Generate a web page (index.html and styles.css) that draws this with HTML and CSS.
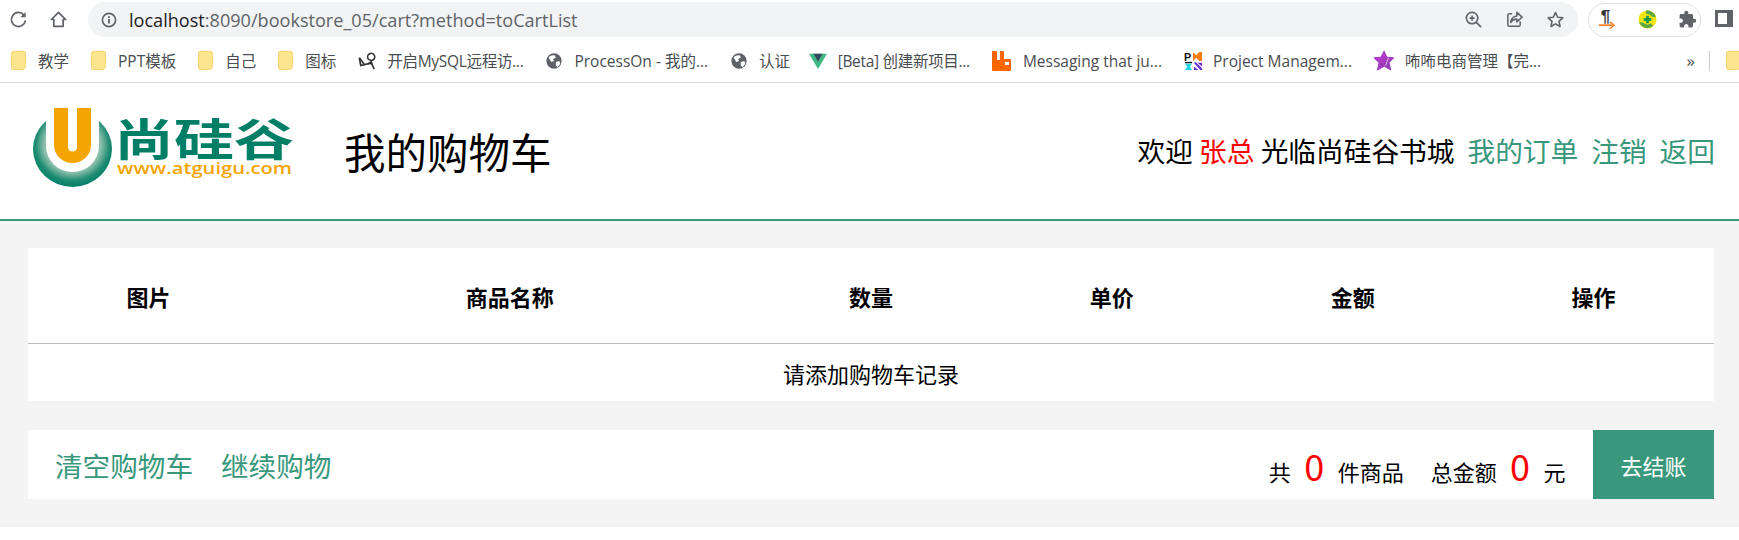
FILE: index.html
```html
<!DOCTYPE html>
<html lang="zh-CN">
<head>
  <meta charset="UTF-8" />
  <title>我的购物车</title>
  <link rel="stylesheet" href="styles.css">
</head>
<body>
  <div class="toolbar">
    <svg class="tool-icon reload" viewBox="0 0 20 20"><path d="M15.6 5.2A7.4 7.4 0 1 0 17.3 11" fill="none" stroke="#5f6368" stroke-width="1.8"/><path d="M17.5 2v5.6h-5.6z" fill="#5f6368"/></svg>
    <svg class="tool-icon home" viewBox="0 0 20 20"><path d="M10 2.5 2.5 10h2.600v7.200h9.800V10h2.600z" fill="none" stroke="#5f6368" stroke-width="1.8" stroke-linejoin="round"/></svg>
    <div class="omnibox">
      <svg class="info" viewBox="0 0 16 16"><circle cx="8" cy="8" r="6.6" fill="none" stroke="#5f6368" stroke-width="1.6"/><rect x="7.1" y="7" width="1.8" height="4.6" fill="#5f6368"/><rect x="7.1" y="4.2" width="1.8" height="1.8" fill="#5f6368"/></svg>
      <span class="url"><b>localhost</b>:8090/bookstore_05/cart?method=toCartList</span>
      <div class="omni-actions">
        <svg viewBox="0 0 20 20"><circle cx="8.5" cy="8.5" r="6" fill="none" stroke="#5f6368" stroke-width="1.7"/><path d="m13 13 5 5M5.800 8.500h5.400M8.500 5.800v5.400" stroke="#5f6368" stroke-width="1.7" fill="none"/></svg>
        <svg viewBox="0 0 20 20"><path d="M7.500 4H4.500a1.500 1.500 0 0 0-1.500 1.500v10A1.500 1.500 0 0 0 4.500 17h10a1.500 1.500 0 0 0 1.500-1.500V12" fill="none" stroke="#5f6368" stroke-width="1.6"/><path d="M12.500 2.500 18 7.500l-5.500 5V9.600c-3 0-5 1-6.500 3.600.4-4 2.700-6.600 6.500-7z" fill="none" stroke="#5f6368" stroke-width="1.6" stroke-linejoin="round"/></svg>
        <svg viewBox="0 0 20 20"><path d="m10 2.600 2.300 5 5.400.6-4 3.700 1.100 5.400L10 14.600l-4.800 2.700 1.100-5.400-4-3.700 5.400-.6z" fill="none" stroke="#5f6368" stroke-width="1.7" stroke-linejoin="round"/></svg>
      </div>
    </div>
    <div class="ext-pill">
      <svg viewBox="0 0 20 20"><text x="8" y="12.500" class="pilcrow">¶</text><path d="M1 16h14" stroke="#f47b20" stroke-width="1.800"/><path d="m12.500 12.500 4.500 3.500-4.500 3.500" fill="none" stroke="#f47b20" stroke-width="1.500"/></svg>
      <svg viewBox="0 0 20 20"><circle cx="10" cy="10" r="9.500" fill="#f5e50c"/><path d="M1 13a9.500 9.500 0 0 0 15 3.500l-2.500-2.500a5.500 5.500 0 0 1-8-.8zM19 7.500A9.500 9.500 0 0 0 8 .8l.8 3.400a6 6 0 0 1 6 3z" fill="#5aa845"/><path d="M10 6v8M6 10h8" stroke="#1f9a46" stroke-width="3"/></svg>
      <svg viewBox="0 0 24 24"><path d="M20.500 11H19V7c0-1.100-.9-2-2-2h-4V3.500C13 2.120 11.880 1 10.500 1S8 2.120 8 3.500V5H4c-1.100 0-1.990.9-1.990 2v3.800H3.500c1.490 0 2.700 1.210 2.700 2.700s-1.210 2.700-2.700 2.700H2V20c0 1.100.9 2 2 2h3.800v-1.500c0-1.490 1.210-2.700 2.700-2.700s2.700 1.210 2.700 2.700V22H17c1.100 0 2-.9 2-2v-4h1.500c1.380 0 2.500-1.120 2.500-2.500S21.880 11 20.500 11z" fill="#5f6368"/></svg>
    </div>
    <div class="side-panel"></div>
  </div>

  <div class="bookmarks">
    <span class="bm in-folder"><i class="folder"></i>教学</span>
    <span class="bm in-folder"><i class="folder"></i>PPT模板</span>
    <span class="bm in-folder"><i class="folder"></i>自己</span>
    <span class="bm in-folder"><i class="folder"></i>图标</span>
    <span class="bm tight"><svg viewBox="0 0 20 20"><path d="M1.500 6.500 7 14l8-1.500L18 19" fill="none" stroke="#333" stroke-width="1.800"/><path d="M1.500 6.500 3 15l4-1M15 11l-4 2" fill="none" stroke="#333" stroke-width="1.800"/><path d="M15 9.500a4 4 0 1 0-3.500-1.500l3 1.500 1 5" fill="none" stroke="#333" stroke-width="1.700"/></svg>开启MySQL远程访...</span>
    <span class="bm"><svg viewBox="0 0 20 20"><circle cx="10" cy="10" r="8.500" fill="#5f6368"/><path d="M4 6c2-2 5-3 7-2l1 2-3 2 1 2-3 1zM12 11l4-1 1 3-3 4-2-2z" fill="#fff"/></svg>ProcessOn - 我的...</span>
    <span class="bm"><svg viewBox="0 0 20 20"><circle cx="10" cy="10" r="8.500" fill="#5f6368"/><path d="M4 6c2-2 5-3 7-2l1 2-3 2 1 2-3 1zM12 11l4-1 1 3-3 4-2-2z" fill="#fff"/></svg>认证</span>
    <span class="bm tight vue"><svg viewBox="0 0 20 20"><path d="M0 2h20L10 19z" fill="#41b883"/><path d="M5 2h10l-5 8.500z" fill="#35495e"/></svg>[Beta] 创建新项目...</span>
    <span class="bm big-icon"><svg viewBox="0 0 20 20"><path d="M0 1a1 1 0 0 1 1-1h3a1 1 0 0 1 1 1v8h3V1a1 1 0 0 1 1-1h2a1 1 0 0 1 1 1v7h6a1 1 0 0 1 1 1v10a1 1 0 0 1-1 1H1a1 1 0 0 1-1-1z" fill="#ff6600"/><rect x="13" y="11" width="4" height="3" fill="#fff"/></svg>Messaging that ju...</span>
    <span class="bm"><svg viewBox="0 0 20 20"><text x="0" y="9.500" class="pm-p">P</text><path d="M1 11h8v1.500H1z" fill="#111"/><path d="M10 0l3.500 3.500L17 0h3v10h-3l-3.500-3.500L10 10z" fill="#f97a12"/><path d="M1 13h8l-2.500 3 2.500 4H1l2.500-4z" fill="#21d4ea"/><path d="M11 12l2-1 7 7v2h-2zM11 16l5 4h-5zM15 12h5v4z" fill="#6b2fd6"/></svg>Project Managem...</span>
    <span class="bm big-icon"><svg viewBox="0 0 20 20"><defs><linearGradient id="star" x1="0" y1="0" x2="1" y2="1"><stop offset="0" stop-color="#d433e0"/><stop offset="1" stop-color="#7a3fa0"/></linearGradient></defs><path d="m10 0 2.800 6.200 7 .5-4.800 5 1.800 7.300-6.500-3.700L3.500 19l1.500-7.300L0 6.700l7-.5z" fill="url(#star)" stroke="#a23ec9" stroke-linejoin="round"/><path d="m14.500 7-3 7.500" stroke="#fff" stroke-width="1" opacity=".7"/></svg>咘咘电商管理【完...</span>
    <span class="more">»</span>
    <i class="sep"></i>
    <i class="folder last"></i>
  </div>

  <div class="header">
    <svg class="logo" viewBox="0 0 262 80">
      <defs>
        <radialGradient id="ring" cx="0.5" cy="0.45" r="0.55">
          <stop offset="0.65" stop-color="#8cbfac"/>
          <stop offset="0.85" stop-color="#1f8c72"/>
          <stop offset="1" stop-color="#007f66"/>
        </radialGradient>
      </defs>
      <ellipse cx="40.500" cy="41" rx="39.500" ry="38" fill="url(#ring)"/>
      <path d="M14 0h53v38a26.500 26 0 0 1-53 0z" fill="#fff"/>
      <path d="M22 0h37v37a18.500 18 0 0 1-37 0z" fill="#f5a503"/>
      <path d="M36 0h9v39a4.500 4.500 0 0 1-9 0z" fill="#fff"/>
      <text x="82" y="48" class="logo-cn" textLength="180" lengthAdjust="spacingAndGlyphs">尚硅谷</text>
      <text x="85" y="65.500" class="logo-en" textLength="175" lengthAdjust="spacingAndGlyphs">www.atguigu.com</text>
    </svg>
    <h1 class="page-title">我的购物车</h1>
    <div class="user-nav">
      <span>欢迎 <em>张总</em> 光临尚硅谷书城</span>
      <a href="#">我的订单</a>
      <a href="#">注销</a>
      <a href="#">返回</a>
    </div>
  </div>

  <div class="content">
    <table class="cart-table">
      <thead>
        <tr><th>图片</th><th class="wide">商品名称</th><th>数量</th><th>单价</th><th>金额</th><th>操作</th></tr>
      </thead>
      <tbody>
        <tr><td colspan="6">请添加购物车记录</td></tr>
      </tbody>
    </table>

    <div class="cart-footer">
      <div class="footer-links">
        <a href="#">清空购物车</a>
        <a href="#">继续购物</a>
      </div>
      <div class="totals">
        <span>共 <b>0</b> 件商品</span>
        <span>总金额 <b>0</b> 元</span>
      </div>
      <a class="checkout" href="#">去结账</a>
    </div>
  </div>
  <div class="page-end"></div>
</body>
</html>
```

FILE: styles.css
```css
html, body { margin: 0; padding: 0; height: 540px; overflow: hidden; background: #fff; }
body { font-family: "Noto Sans CJK SC", sans-serif; color: #000; }
a { color: #39987c; text-decoration: none; }
em { font-style: normal; color: #f00; }

.toolbar { display: flex; align-items: center; height: 39px; padding-left: 9px; box-sizing: border-box; }
.tool-icon { width: 19px; height: 19px; flex: none; }
.home { margin-left: 21px; }
.omnibox { display: flex; align-items: center; width: 1490px; height: 35px; margin-left: 20px; padding-left: 13px; box-sizing: border-box; background: #f1f3f4; border-radius: 18px; }
.info { width: 16px; height: 16px; }
.url { margin-left: 12px; font: 18.1px "Open Sans", sans-serif; color: #5f6368; white-space: nowrap; }
.url b { font-weight: 400; color: #202124; }
.omni-actions { display: flex; gap: 22px; margin-left: auto; margin-right: 13px; }
.omni-actions svg { width: 19px; height: 19px; }
.ext-pill { display: flex; align-items: center; gap: 21px; width: 113px; height: 34px; margin-left: 10px; padding-left: 9px; box-sizing: border-box; border: 1px solid #dfe1e5; border-radius: 17px; }
.ext-pill svg { width: 19px; height: 19px; overflow: visible; }
.pilcrow { font: bold 18px "Liberation Sans", sans-serif; fill: #333; text-anchor: middle; }
.pm-p { font: bold 12px "Liberation Sans", sans-serif; fill: #111; }
.side-panel { width: 18px; height: 17px; margin: 0 0 2px 14px; box-sizing: border-box; border: 3px solid #5f6368; border-right-width: 6px; }

.bookmarks { display: flex; align-items: center; gap: 22px; height: 43px; padding-left: 11px; border-bottom: 1px solid #dadce0; font: 15.5px "Open Sans", "Noto Sans CJK SC", sans-serif; color: #494c50; white-space: nowrap; overflow: hidden; }
.bm { display: flex; align-items: center; gap: 11px; }
.bm svg { width: 18px; height: 18px; flex: none; }
.in-folder { gap: 12px; }
.tight { letter-spacing: -0.3px; }
.vue { margin-left: -3.5px; }
.big-icon svg { width: 20px; height: 20px; }
.folder { display: block; width: 15px; height: 19px; flex: none; background: #fde48e; border: 1px solid #f7d672; box-sizing: border-box; border-radius: 2px 2px 4px 2px; }
.more { margin-left: auto; font-size: 17px; }
.sep { width: 1px; height: 20px; background: #ccc; margin-left: -8px; }
.folder.last { margin-left: -6px; margin-right: -2px; }

.header { display: flex; align-items: center; height: 136px; padding: 0 24px 0 32px; border-bottom: 2px solid #39987c; background: #fff; }
.logo { width: 262px; height: 80px; flex: none; margin-bottom: 6px; overflow: visible; }
.logo-cn { font: bold 44px "Noto Sans CJK SC", sans-serif; fill: #007f66; }
.logo-en { font: 600 17px "Open Sans", sans-serif; fill: #f5a503; }
.page-title { margin: 0 0 0 50px; font-size: 41.5px; font-weight: 400; }
.user-nav { display: flex; gap: 13px; margin: 0 0 2px auto; font-size: 27.7px; }

.content { padding: 27px 25px 28px 28px; background: #f4f4f4; }
.cart-table { width: 100%; border-collapse: collapse; background: #fff; table-layout: fixed; }
.cart-table th { height: 95px; padding: 0; font-size: 22px; font-weight: 700; border-bottom: 1px solid #bbb; }
.cart-table th.wide { width: 28.57%; }
.cart-table td { height: 57px; padding: 0; font-size: 22px; text-align: center; }

.cart-footer { display: flex; align-items: center; height: 69px; margin-top: 29px; padding-left: 27px; background: #fff; }
.footer-links { display: flex; gap: 28px; font-size: 27.6px; }
.totals { display: flex; gap: 27px; margin-left: auto; margin-right: 27.5px; font-size: 22px; }
.totals b { margin: 0 8.5px; font-size: 36px; font-weight: 400; color: #f00; }
.checkout { display: flex; align-items: center; justify-content: center; width: 121px; height: 69px; background: #39987c; color: #fff; font-size: 22px; }
.page-end { height: 13px; background: #fff; }
```
